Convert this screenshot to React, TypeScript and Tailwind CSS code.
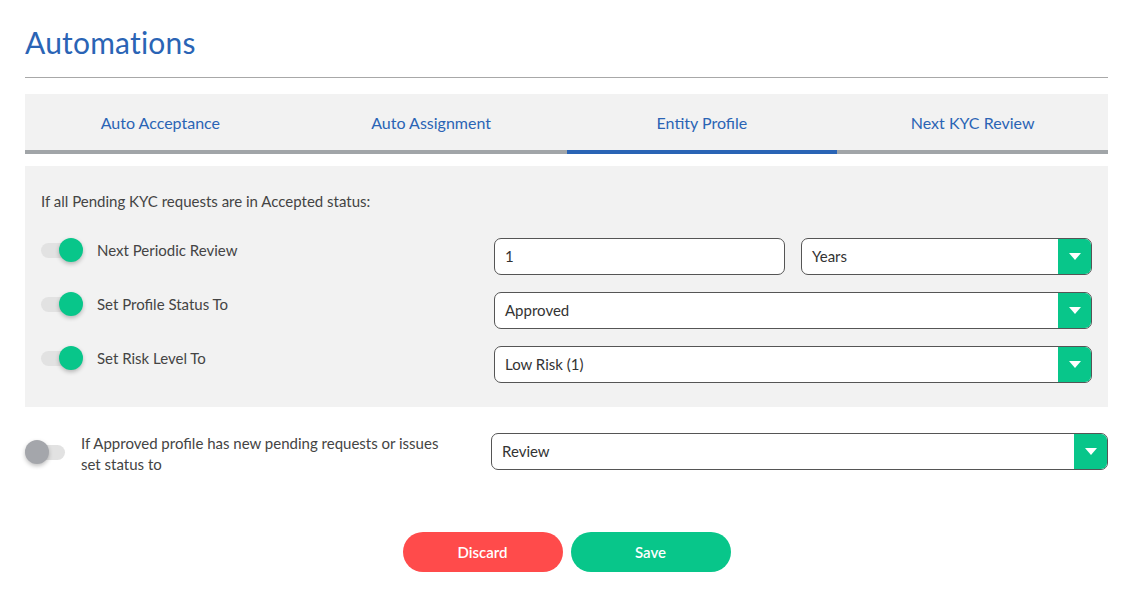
import { useState } from "react";

const tabs = ["Auto Acceptance", "Auto Assignment", "Entity Profile", "Next KYC Review"];

const Toggle = ({ on, className = "" }: { on: boolean; className?: string }) => (
    <div className={`relative w-[40px] h-[24px] shrink-0 ${className}`}>
        <div className="absolute left-0 right-0 top-[5px] h-[15px] rounded-full bg-[#e2e2e2]" />
        <div
            className={`absolute top-0 w-[24px] h-[24px] rounded-full shadow-[0_2px_4px_rgba(0,0,0,0.25)] ${on ? "left-[18px] bg-[#08c68a]" : "left-0 bg-[#a4a6ab]"}`}
        />
    </div>
);

const Select = ({ value, className = "" }: { value: string; className?: string }) => (
    <div className={`flex h-[37px] bg-white border border-[#555] rounded-[7px] overflow-hidden ${className}`}>
        <div className="flex-1 flex items-center pl-[10px] text-[15px] text-[#333]">{value}</div>
        <div className="w-[33px] bg-[#08c68a] flex items-center justify-center">
            <svg width="12" height="8" viewBox="0 0 12 8">
                <path d="M0 0 L12 0 L6 7 Z" fill="#fff" />
            </svg>
        </div>
    </div>
);

export default function App() {
    const [active, setActive] = useState(2);

    return (
        <div className="min-h-screen bg-white px-[25px] pt-[24px]" style={{ fontFamily: "Lato, 'Open Sans', sans-serif" }}>
            <h1 className="text-[30px] leading-[36px] text-[#2a64b5] font-normal tracking-[0.2px]">Automations</h1>
            <div className="mt-[17px] border-t border-[#a8a8a8]" />

            {/* tabs */}
            <div className="mt-[16px] flex bg-[#f2f2f2] border-b-4 border-[#a1a5a8]">
                {tabs.map((t, i) => (
                    <button
                        key={t}
                        onClick={() => setActive(i)}
                        className="flex-1 h-[56px] pt-[2px] text-[16px] text-[#2a64b5] relative"
                    >
                        {t}
                        {active === i && (
                            <span className="absolute left-0 right-0 -bottom-[4px] h-[4px] bg-[#2a64b5]" />
                        )}
                    </button>
                ))}
            </div>

            {/* panel */}
            <div className="mt-[12px] bg-[#f2f2f2] px-[16px] pt-[25px] pb-[24px]">
                <p className="text-[15px] leading-[20px] text-[#444]">If all Pending KYC requests are in Accepted status:</p>
                <div className="mt-[27px] flex flex-col gap-[17px]">
                    <div className="flex">
                        <div className="flex-1 flex items-center gap-[16px] h-[24px]">
                            <Toggle on />
                            <span className="text-[15px] text-[#444]">Next Periodic Review</span>
                        </div>
                        <div className="w-[598px] flex gap-[16px]">
                            <div className="w-[291px] h-[37px] bg-white border border-[#555] rounded-[7px] flex items-center pl-[10px] text-[15px] text-[#333]">1</div>
                            <Select value="Years" className="w-[291px]" />
                        </div>
                    </div>
                    <div className="flex">
                        <div className="flex-1 flex items-center gap-[16px] h-[24px]">
                            <Toggle on />
                            <span className="text-[15px] text-[#444]">Set Profile Status To</span>
                        </div>
                        <Select value="Approved" className="w-[598px]" />
                    </div>
                    <div className="flex">
                        <div className="flex-1 flex items-center gap-[16px] h-[24px]">
                            <Toggle on />
                            <span className="text-[15px] text-[#444]">Set Risk Level To</span>
                        </div>
                        <Select value="Low Risk (1)" className="w-[598px]" />
                    </div>
                </div>
            </div>

            {/* bottom row */}
            <div className="mt-[26px] flex items-start">
                <div className="flex-1 flex items-start gap-[16px]">
                    <Toggle on={false} className="mt-[7px]" />
                    <span className="text-[15px] leading-[21px] text-[#444] w-[380px]">
                        If Approved profile has new pending requests or issues set status to
                    </span>
                </div>
                <Select value="Review" className="w-[617px]" />
            </div>

            <div className="mt-[57px] flex justify-center gap-[8px]">
                <button className="w-[160px] h-[40px] rounded-full bg-[#ff4b4b] text-white text-[15px] font-semibold">Discard</button>
                <button className="w-[160px] h-[40px] rounded-full bg-[#08c68a] text-white text-[15px] font-semibold">Save</button>
            </div>
        </div>
    );
}
